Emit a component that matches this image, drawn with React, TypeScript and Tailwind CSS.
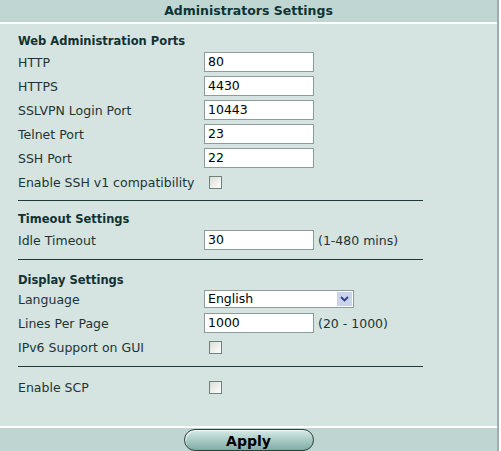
import React from "react";

function TextInput({ value }: { value: string }) {
  return (
    <div className="flex h-[20px] w-[110px] items-center border border-[#8c9c9a] bg-white pl-[3px] pt-px text-[12.5px] leading-none text-black">
      {value}
    </div>
  );
}

function CheckBox() {
  return (
    <div className="ml-[5px] h-[13px] w-[13px] border border-[#6f817f] bg-gradient-to-br from-[#dcdcd6] to-white" />
  );
}

function Row({ label, children, h = "h-[24px]" }: { label: string; children?: React.ReactNode; h?: string }) {
  return (
    <div className={`flex ${h} items-center`}>
      <div className="mt-[2px] w-[186px] text-[12.5px] text-[#1d3434]">{label}</div>
      <div className="flex items-center">{children}</div>
    </div>
  );
}

function Hint({ text }: { text: string }) {
  return <span className="mt-[2px] ml-[4px] text-[12.5px] text-[#1d3434]">{text}</span>;
}

function Divider({ mt }: { mt: string }) {
  return <div className={`${mt} h-px w-[405px] bg-[#1f3b39]`} />;
}

function Heading({ text, mt }: { text: string; mt: string }) {
  return <div className={`${mt} h-[16px] text-[11.5px] font-bold leading-[16px] text-[#123232]`}>{text}</div>;
}

export default function App() {
  return (
    <div className="h-[451px] w-[501px] bg-white font-['DejaVu_Sans',Verdana,sans-serif]">
      <div className="flex h-full w-[499px] flex-col border-r-2 border-[#9eaeab] bg-[#d5e3e1]">
        <div className="flex h-[24px] items-start justify-center border-b-2 border-white bg-[#c0d6d2] pt-[3px] text-[12.5px] font-bold leading-[16px] text-[#0f3434]">
          Administrators Settings
        </div>
        <div className="flex flex-1 flex-col pl-[18px]">
          <Heading text="Web Administration Ports" mt="mt-[9px]" />
          <div className="mt-[1px]">
            <Row label="HTTP"><TextInput value="80" /></Row>
            <Row label="HTTPS"><TextInput value="4430" /></Row>
            <Row label="SSLVPN Login Port"><TextInput value="10443" /></Row>
            <Row label="Telnet Port"><TextInput value="23" /></Row>
            <Row label="SSH Port"><TextInput value="22" /></Row>
            <Row label="Enable SSH v1 compatibility"><CheckBox /></Row>
          </div>
          <Divider mt="mt-[6px]" />
          <Heading text="Timeout Settings" mt="mt-[10px]" />
          <div className="mt-[1px]">
            <Row label="Idle Timeout">
              <TextInput value="30" />
              <Hint text="(1-480 mins)" />
            </Row>
          </div>
          <Divider mt="mt-[7px]" />
          <Heading text="Display Settings" mt="mt-[12px]" />
          <div className="-mt-px">
            <Row label="Language" h="h-[24px]">
              <div className="flex h-[18px] w-[150px] items-center border border-[#8c9c9a] bg-white">
                <span className="flex-1 pl-[3px] pt-px text-[12.5px] leading-none text-black">English</span>
                <div className="mr-px flex h-[14px] w-[15px] items-center justify-center bg-[#c9d3ea]">
                  <svg width="9" height="6" viewBox="0 0 9 6">
                    <path d="M1 1 L4.5 4.5 L8 1" fill="none" stroke="#30408a" strokeWidth="1.8" />
                  </svg>
                </div>
              </div>
            </Row>
          </div>
          <Row label="Lines Per Page">
            <TextInput value="1000" />
            <Hint text="(20 - 1000)" />
          </Row>
          <Row label="IPv6 Support on GUI"><CheckBox /></Row>
          <Divider mt="mt-[7px]" />
          <div className="mt-[8px]">
            <Row label="Enable SCP"><CheckBox /></Row>
          </div>
        </div>
        <div className="flex h-[25px] justify-center border-t-2 border-white bg-[#bfd5d1] pt-px">
          <button
            type="button"
            className="flex h-[22px] w-[130px] items-center justify-center rounded-full border border-[#2e3e3c] bg-gradient-to-b from-[#d9ebe7] via-[#a9cbc5] to-[#7fada6] pt-[2px] text-[14px] font-bold leading-none text-black shadow-[inset_1px_1px_0_#eef8f6]"
          >
            Apply
          </button>
        </div>
      </div>
    </div>
  );
}
